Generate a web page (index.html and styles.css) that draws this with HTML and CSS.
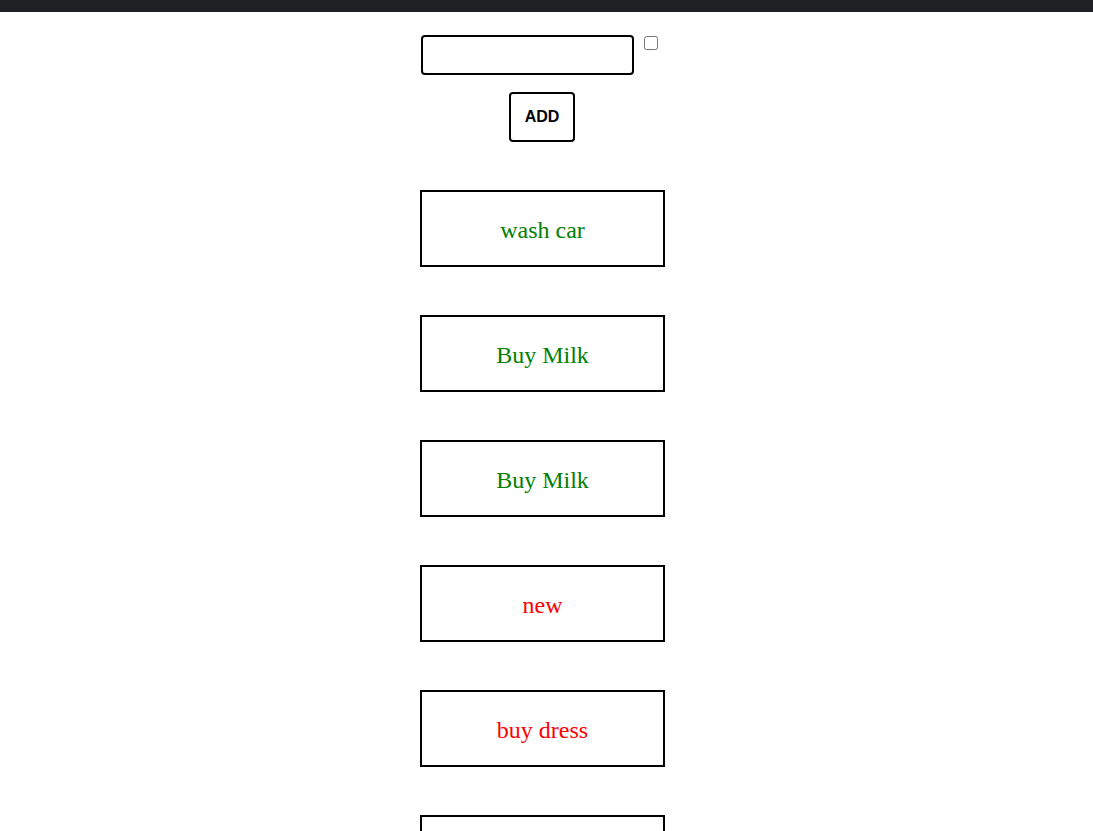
FILE: index.html
```html
<!DOCTYPE html>
<html>
<head>
<meta charset="utf-8">
<link rel="stylesheet" href="styles.css">
</head>
<body>
<div class="topbar"></div>
<main class="main">
  <div class="form-row">
    <input class="text-input" type="text">
    <input class="check" type="checkbox">
  </div>
  <button class="add-btn">ADD</button>
  <ul class="todo-list">
    <li class="todo done">wash car</li>
    <li class="todo done">Buy Milk</li>
    <li class="todo done">Buy Milk</li>
    <li class="todo pending">new</li>
    <li class="todo pending">buy dress</li>
    <li class="todo pending"></li>
  </ul>
</main>
</body>
</html>
```
FILE: styles.css
```css
html, body {
  margin: 0;
  padding: 0;
  background: #fff;
  overflow: hidden;
}
body {
  font-family: "Liberation Serif", "Times New Roman", serif;
}
.topbar {
  height: 12px;
  background: #202124;
}
.main {
  display: flex;
  flex-direction: column;
  align-items: center;
  padding-right: 8px;
}
.form-row {
  display: flex;
  align-items: flex-start;
  margin-top: 23px;
}
.text-input {
  width: 213px;
  height: 40px;
  box-sizing: border-box;
  border: 2px solid #000;
  border-radius: 4px;
  margin: 0;
  padding: 0 6px;
  font-size: 16px;
}
.check {
  width: 14px;
  height: 14px;
  margin: 1px 7px 0 10px;
}
.add-btn {
  margin: 17px 1px 0 0;
  width: 66px;
  height: 50px;
  box-sizing: border-box;
  border: 2px solid #000;
  border-radius: 4px;
  background: #fff;
  font-family: "Liberation Sans", Arial, sans-serif;
  font-weight: bold;
  font-size: 16px;
  color: #000;
  padding: 0;
}
.todo-list {
  list-style: none;
  margin: 48px 0 0;
  padding: 0;
  display: flex;
  flex-direction: column;
  gap: 48px;
}
.todo {
  width: 245px;
  height: 77px;
  box-sizing: border-box;
  border: 2px solid #000;
  display: flex;
  align-items: center;
  justify-content: center;
  font-size: 24px;
  padding-top: 4px;
}
.done { color: #008000; }
.pending { color: #ff0000; }
```
